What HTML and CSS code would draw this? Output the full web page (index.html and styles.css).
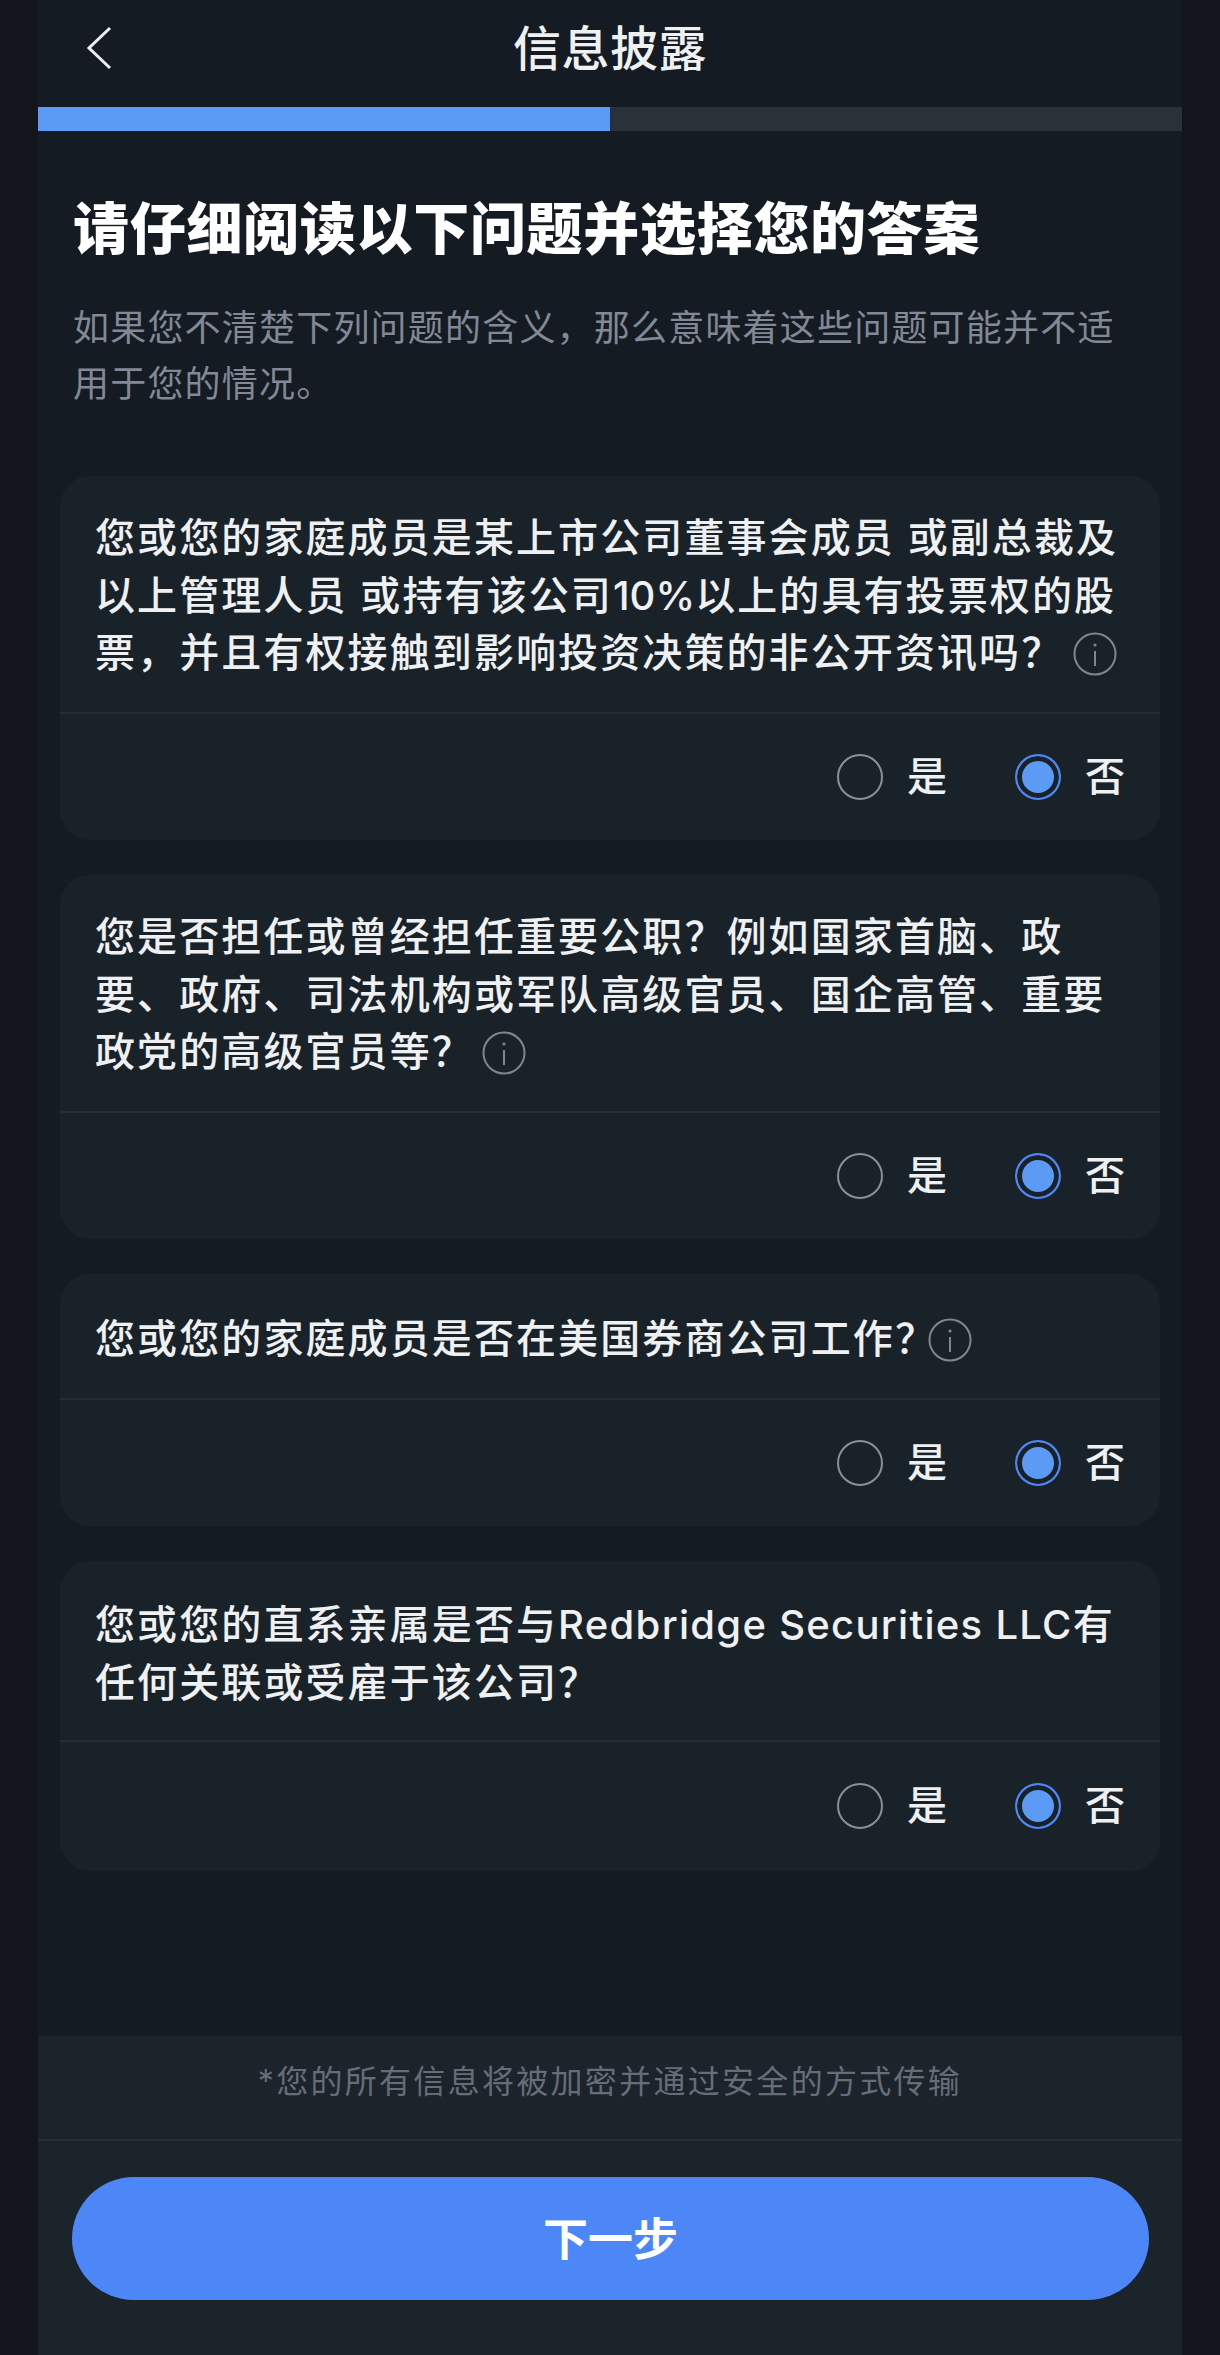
FILE: index.html
```html
<!DOCTYPE html>
<html lang="zh-CN">
<head>
<meta charset="utf-8">
<title>信息披露</title>
<link rel="stylesheet" href="styles.css">
</head>
<body>
<main class="phone">
  <header class="topbar">
    <button class="back" aria-label="返回">
      <svg viewBox="0 0 26 44" width="26" height="44"><path d="M24 2 3 22l21 20" fill="none" stroke="#eef0f2" stroke-width="3"/></svg>
    </button>
    <h1 class="title">信息披露</h1>
  </header>
  <div class="progress"><div class="progress-fill"></div></div>
  <section class="intro">
    <h2 class="heading">请仔细阅读以下问题并选择您的答案</h2>
    <p class="sub">如果您不清楚下列问题的含义，那么意味着这些问题可能并不适<br>用于您的情况。</p>
  </section>
  <section class="cards">
    <article class="card">
      <p class="question">您或您的家庭成员是某上市公司董事会成员 或副总裁及<br>以上管理人员 或持有该公司<span class="pct">10%</span>以上的具有投票权的股<br>票，并且有权接触到影响投资决策的非公开资讯吗？<svg class="info info-first" viewBox="0 0 44 44" width="44" height="44"><circle cx="22" cy="22" r="20.5" fill="none" stroke="#80868f" stroke-width="2"/><circle cx="22" cy="13" r="1.6" fill="#80868f"/><path d="M22 19v15" stroke="#80868f" stroke-width="2"/></svg></p>
      <div class="options">
        <label class="opt"><span class="radio"></span><span>是</span></label>
        <label class="opt"><span class="radio on"></span><span>否</span></label>
      </div>
    </article>
    <article class="card">
      <p class="question">您是否担任或曾经担任重要公职？例如国家首脑、政<br>要、政府、司法机构或军队高级官员、国企高管、重要<br>政党的高级官员等？<svg class="info" viewBox="0 0 44 44" width="44" height="44"><circle cx="22" cy="22" r="20.5" fill="none" stroke="#80868f" stroke-width="2"/><circle cx="22" cy="13" r="1.6" fill="#80868f"/><path d="M22 19v15" stroke="#80868f" stroke-width="2"/></svg></p>
      <div class="options">
        <label class="opt"><span class="radio"></span><span>是</span></label>
        <label class="opt"><span class="radio on"></span><span>否</span></label>
      </div>
    </article>
    <article class="card card-single">
      <p class="question">您或您的家庭成员是否在美国券商公司工作？<svg class="info info-tight" viewBox="0 0 44 44" width="44" height="44"><circle cx="22" cy="22" r="20.5" fill="none" stroke="#80868f" stroke-width="2"/><circle cx="22" cy="13" r="1.6" fill="#80868f"/><path d="M22 19v15" stroke="#80868f" stroke-width="2"/></svg></p>
      <div class="options">
        <label class="opt"><span class="radio"></span><span>是</span></label>
        <label class="opt"><span class="radio on"></span><span>否</span></label>
      </div>
    </article>
    <article class="card card-last">
      <p class="question">您或您的直系亲属是否与<span class="latin">Redbridge Securities LLC</span>有<br>任何关联或受雇于该公司？</p>
      <div class="options">
        <label class="opt"><span class="radio"></span><span>是</span></label>
        <label class="opt"><span class="radio on"></span><span>否</span></label>
      </div>
    </article>
  </section>
  <footer class="footer">
    <p class="note">*您的所有信息将被加密并通过安全的方式传输</p>
    <div class="action"><button class="next">下一步</button></div>
  </footer>
</main>
</body>
</html>
```
FILE: styles.css
```css
* { box-sizing: border-box; }
html, body { margin: 0; padding: 0; }
body {
  background: #14141c;
  font-family: Inter, "Noto Sans CJK SC", sans-serif;
  color: #eef0f2;
}
.phone {
  width: 1144px;
  height: 2355px;
  margin-left: 38px;
  background: #141b22;
  display: flex;
  flex-direction: column;
}
.topbar {
  height: 107px;
  flex: none;
  display: flex;
  align-items: center;
  justify-content: center;
  position: relative;
  padding-bottom: 10px;
}
.back {
  position: absolute;
  left: 48px;
  top: 26px;
  padding: 0;
  border: 0;
  background: none;
  line-height: 0;
}
.title {
  margin: 0;
  font-size: 48px;
  font-weight: 500;
  line-height: 60px;
  letter-spacing: 0.5px;
}
.progress {
  height: 24px;
  flex: none;
  background: #2a3138;
}
.progress-fill {
  width: 50%;
  height: 100%;
  background: #5b9bf6;
}
.intro {
  padding: 62px 35px 0;
  flex: none;
}
.heading {
  margin: 0;
  font-size: 56px;
  font-weight: 900;
  line-height: 72px;
  letter-spacing: 0.7px;
  color: #fff;
}
.sub {
  margin: 35px 0 0;
  font-size: 36px;
  line-height: 56px;
  letter-spacing: 1.2px;
  color: #828895;
}
.cards {
  margin-top: 64px;
  padding: 0 22px;
  display: flex;
  flex-direction: column;
  gap: 35px;
}
.card {
  background: #1a2229;
  border-radius: 30px;
}
.question {
  margin: 0;
  padding: 33px 35px 30.2px;
  font-size: 40px;
  font-weight: 500;
  line-height: 57.6px;
  letter-spacing: 2.1px;
  border-bottom: 2px solid #262d34;
  color: #eef0f2;
}
.latin { letter-spacing: 1.3px; }
.pct { letter-spacing: 0; }
.card-single .question {
  height: 126px;
  padding-top: 36px;
  padding-bottom: 30px;
}
.card-last .question {
  padding-top: 35px;
  padding-bottom: 28.8px;
}
.info {
  vertical-align: -9px;
  margin-left: 8px;
}
.info-first { margin-left: 10px; }
.info-tight { margin-left: -9px; }
.options {
  height: 126px;
  display: flex;
  justify-content: flex-end;
  align-items: center;
  gap: 68px;
  padding-right: 35px;
}
.card-last .options { height: 129px; }
.opt {
  display: flex;
  align-items: center;
  gap: 24px;
  font-size: 40px;
  font-weight: 500;
  line-height: 48px;
}
.radio {
  width: 46px;
  height: 46px;
  border-radius: 50%;
  border: 2.5px solid #8a8f98;
  display: block;
  flex: none;
}
.radio.on {
  border-color: #4d87f7;
  background: #5b9bf6;
  box-shadow: inset 0 0 0 5px #1a2229;
}
.footer {
  margin-top: auto;
  background: #1b232b;
  flex: none;
}
.note {
  margin: 0;
  height: 105px;
  padding-bottom: 18px;
  display: flex;
  align-items: center;
  justify-content: center;
  font-size: 32px;
  letter-spacing: 2.3px;
  color: #666d77;
  border-bottom: 2px solid #272e35;
}
.action {
  padding: 36px 33px 55px 34px;
}
.next {
  display: block;
  width: 100%;
  height: 123px;
  padding: 0 0 4px;
  border: 0;
  border-radius: 62px;
  background: #4d87f7;
  color: #fff;
  font: 700 45px "Noto Sans CJK SC", sans-serif;
}
```
